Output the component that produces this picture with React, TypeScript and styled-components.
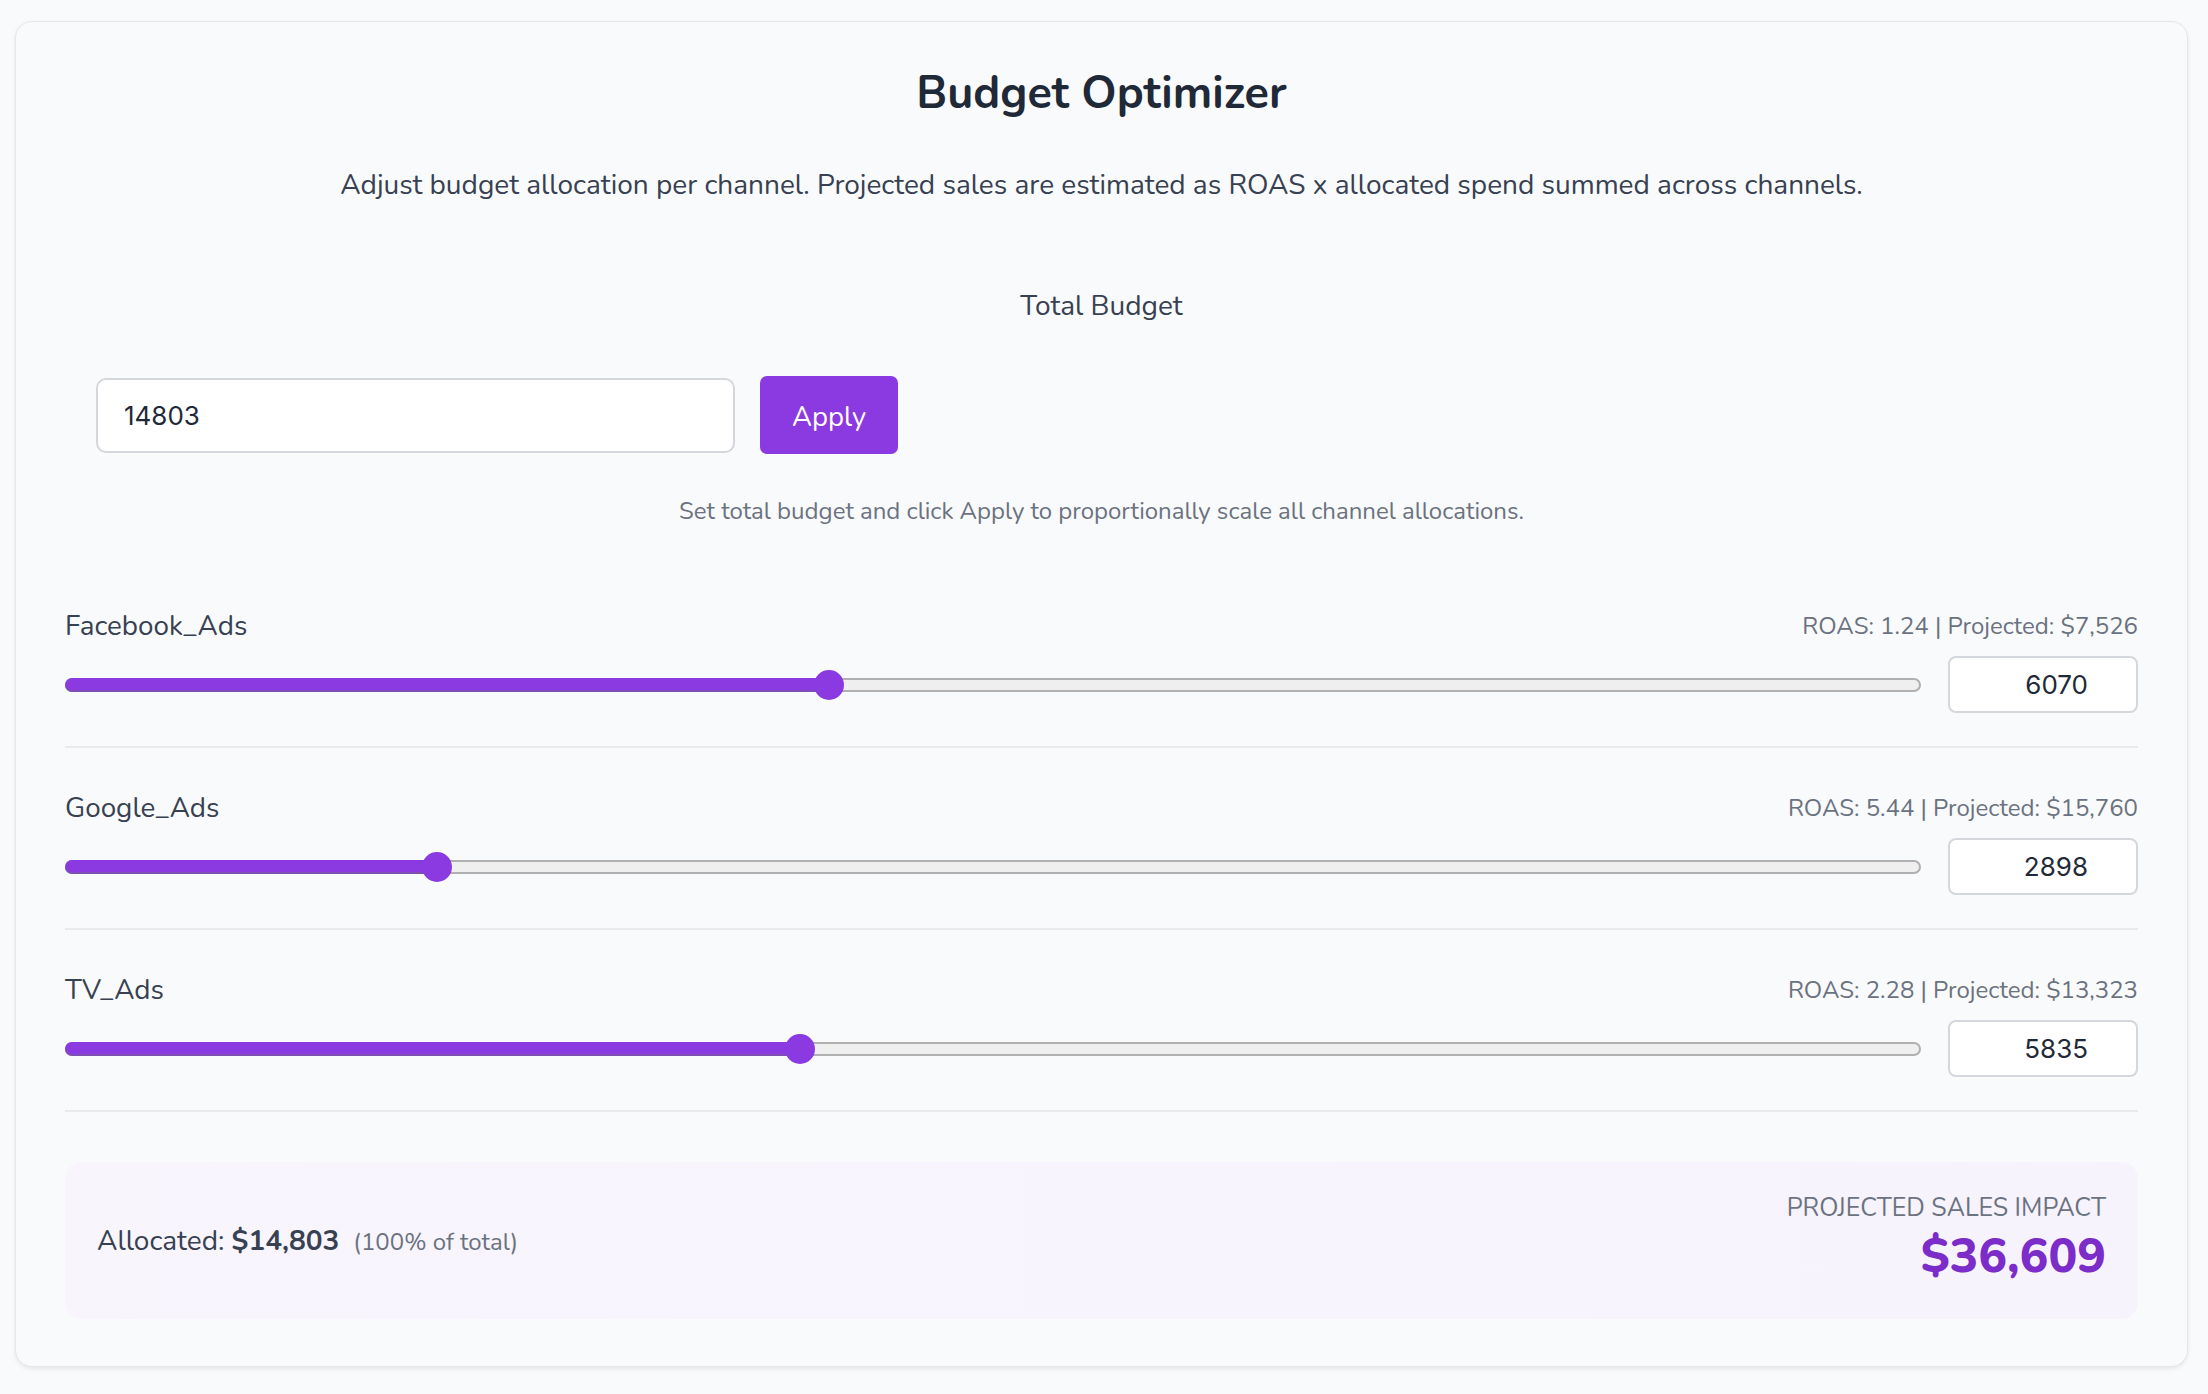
import React, { useState } from 'react';
import styled, { createGlobalStyle } from 'styled-components';

const GlobalStyle = createGlobalStyle`
  * { box-sizing: border-box; }
  body {
    margin: 0;
    background: #f9fafb;
    font-family: 'Nunito', 'Lato', 'Noto Sans', sans-serif;
    color: #374151;
  }
`;

const Page = styled.div`
  padding: 21px 20px 27px 15px;
`;

const Card = styled.div`
  background: #f9fafb;
  border: 1px solid #e5e7eb;
  border-radius: 17px;
  box-shadow: 0 2px 4px rgba(0, 0, 0, 0.08);
  padding: 45px 49px 47px 49px;
`;

const Title = styled.h1`
  margin: 0;
  text-align: center;
  font-size: 45px;
  line-height: 54px;
  font-weight: 700;
  color: #1f2937;
`;

const Subtitle = styled.p`
  margin: 45px 0 0;
  text-align: center;
  font-size: 28px;
  line-height: 38px;
  color: #374151;
`;

const BudgetSection = styled.section`
  display: flex;
  flex-direction: column;
  margin-top: 83px;
`;

const BudgetLabel = styled.div`
  text-align: center;
  font-size: 28px;
  line-height: 38px;
  color: #374151;
`;

const BudgetRow = styled.div`
  display: flex;
  align-items: center;
  gap: 25px;
  margin-top: 51px;
  padding: 0 31px;
`;

const BudgetInput = styled.input`
  width: 639px;
  height: 75px;
  border: 2px solid #d4d7dc;
  border-radius: 10px;
  background: #ffffff;
  padding: 0 26px;
  font-family: 'Inter', 'Liberation Sans', sans-serif;
  font-size: 26px;
  color: #1f2937;
  outline: none;
`;

const ApplyButton = styled.button`
  width: 138px;
  height: 78px;
  border: none;
  border-radius: 7px;
  background: #8a3ae0;
  color: #ffffff;
  font-family: inherit;
  font-size: 27.5px;
  padding-top: 4px;
  cursor: pointer;
`;

const HelpText = styled.p`
  margin: 42px 0 0;
  text-align: center;
  font-size: 24px;
  line-height: 30px;
  color: #6b7280;
`;

const ChannelList = styled.div`
  margin-top: 81px;
  display: flex;
  flex-direction: column;
`;

const ChannelRow = styled.div`
  display: flex;
  flex-direction: column;
  padding-bottom: 33px;
  border-bottom: 2px solid #e8eaed;
  & + & {
    padding-top: 41px;
  }
`;

const ChannelHead = styled.div`
  display: flex;
  justify-content: space-between;
  align-items: center;
`;

const ChannelName = styled.span`
  font-size: 27.8px;
  line-height: 38px;
  color: #374151;
`;

const ChannelStats = styled.span`
  font-size: 24px;
  line-height: 38px;
  color: #6b7280;
`;

const ControlRow = styled.div`
  display: flex;
  align-items: center;
  gap: 27px;
  margin-top: 11px;
`;

const SliderTrack = styled.div`
  position: relative;
  flex: 1;
  height: 14px;
  border: 2px solid #b0b0b0;
  border-radius: 7px;
  background: #efefef;
`;

const SliderFill = styled.div`
  position: absolute;
  left: -2px;
  top: -2px;
  bottom: -2px;
  border-radius: 7px;
  background: #8a3ae0;
  border-bottom: 2px solid #7d4fb5;
`;

const SliderThumb = styled.div`
  position: absolute;
  top: 50%;
  width: 30px;
  height: 30px;
  margin-top: -15px;
  margin-left: -2px;
  border-radius: 50%;
  background: #8a3ae0;
  pointer-events: none;
`;

const RangeInput = styled.input`
  position: absolute;
  inset: -10px -2px;
  width: calc(100% + 4px);
  margin: 0;
  opacity: 0;
  cursor: pointer;
`;

const AmountInput = styled.input`
  width: 190px;
  height: 57px;
  border: 2px solid #d4d7dc;
  border-radius: 8px;
  background: #ffffff;
  padding: 0 48px 0 12px;
  text-align: right;
  font-family: 'Inter', 'Liberation Sans', sans-serif;
  font-size: 26px;
  color: #1f2937;
  outline: none;
  -moz-appearance: textfield;
  &::-webkit-outer-spin-button,
  &::-webkit-inner-spin-button {
    -webkit-appearance: none;
    margin: 0;
  }
`;

const Summary = styled.div`
  display: flex;
  justify-content: space-between;
  align-items: center;
  margin-top: 50px;
  height: 157px;
  padding: 0 32px;
  border-radius: 17px;
  background: linear-gradient(90deg, #f8f5fd, #f7f3fd);
`;

const Allocated = styled.div`
  font-size: 28px;
  color: #374151;
  strong {
    font-weight: 700;
  }
`;

const Percent = styled.span`
  margin-left: 14px;
  font-size: 24px;
  color: #6b7280;
`;

const Impact = styled.div`
  display: flex;
  flex-direction: column;
  align-items: flex-end;
  margin-top: -4px;
`;

const ImpactLabel = styled.span`
  font-size: 25px;
  line-height: 34px;
  text-transform: uppercase;
  color: #6b7280;
`;

const ImpactValue = styled.span`
  font-size: 48px;
  line-height: 62px;
  font-weight: 800;
  color: #7b2cc9;
`;

type Channel = { name: string; roas: number; spend: number };

const initialChannels: Channel[] = [
  { name: 'Facebook_Ads', roas: 1.2399, spend: 6070 },
  { name: 'Google_Ads', roas: 5.4382, spend: 2898 },
  { name: 'TV_Ads', roas: 2.2833, spend: 5835 },
];

const fmt = (n: number) => '$' + Math.round(n).toLocaleString('en-US');

const App = () => {
  const [channels, setChannels] = useState<Channel[]>(initialChannels);
  const [total, setTotal] = useState('14803');
  const max = Number(total) || 1;

  const allocated = channels.reduce((s, c) => s + c.spend, 0);
  const projected = channels.reduce((s, c) => s + c.spend * c.roas, 0);

  const setSpend = (idx: number, value: number) => {
    setChannels((prev) =>
      prev.map((c, i) => (i === idx ? { ...c, spend: Math.max(0, value) } : c))
    );
  };

  const onApply = () => {
    const target = Number(total);
    if (!target || !allocated) return;
    const ratio = target / allocated;
    setChannels((prev) => prev.map((c) => ({ ...c, spend: Math.round(c.spend * ratio) })));
  };

  return (
    <>
      <GlobalStyle />
      <Page>
        <Card>
          <Title>Budget Optimizer</Title>
          <Subtitle>
            Adjust budget allocation per channel. Projected sales are estimated as ROAS x allocated
            spend summed across channels.
          </Subtitle>

          <BudgetSection>
            <BudgetLabel>Total Budget</BudgetLabel>
            <BudgetRow>
              <BudgetInput
                type="text"
                value={total}
                onChange={(e) => setTotal(e.target.value)}
              />
              <ApplyButton type="button" onClick={onApply}>
                Apply
              </ApplyButton>
            </BudgetRow>
            <HelpText>
              Set total budget and click Apply to proportionally scale all channel allocations.
            </HelpText>
          </BudgetSection>

          <ChannelList>
            {channels.map((c, idx) => {
              const frac = Math.min(1, c.spend / max);
              return (
                <ChannelRow key={c.name}>
                  <ChannelHead>
                    <ChannelName>{c.name}</ChannelName>
                    <ChannelStats>
                      ROAS: {c.roas.toFixed(2)} | Projected: {fmt(c.spend * c.roas)}
                    </ChannelStats>
                  </ChannelHead>
                  <ControlRow>
                    <SliderTrack>
                      <SliderFill style={{ width: `calc(15px + (100% - 26px) * ${frac})` }} />
                      <SliderThumb style={{ left: `calc((100% - 26px) * ${frac})` }} />
                      <RangeInput
                        type="range"
                        min={0}
                        max={max}
                        value={c.spend}
                        onChange={(e) => setSpend(idx, Number(e.target.value))}
                      />
                    </SliderTrack>
                    <AmountInput
                      type="number"
                      value={c.spend}
                      onChange={(e) => setSpend(idx, Number(e.target.value))}
                    />
                  </ControlRow>
                </ChannelRow>
              );
            })}
          </ChannelList>

          <Summary>
            <Allocated>
              Allocated: <strong>{fmt(allocated)}</strong>
              <Percent>({Math.round((allocated / max) * 100)}% of total)</Percent>
            </Allocated>
            <Impact>
              <ImpactLabel>Projected Sales Impact</ImpactLabel>
              <ImpactValue>{fmt(projected)}</ImpactValue>
            </Impact>
          </Summary>
        </Card>
      </Page>
    </>
  );
};

export default App;
